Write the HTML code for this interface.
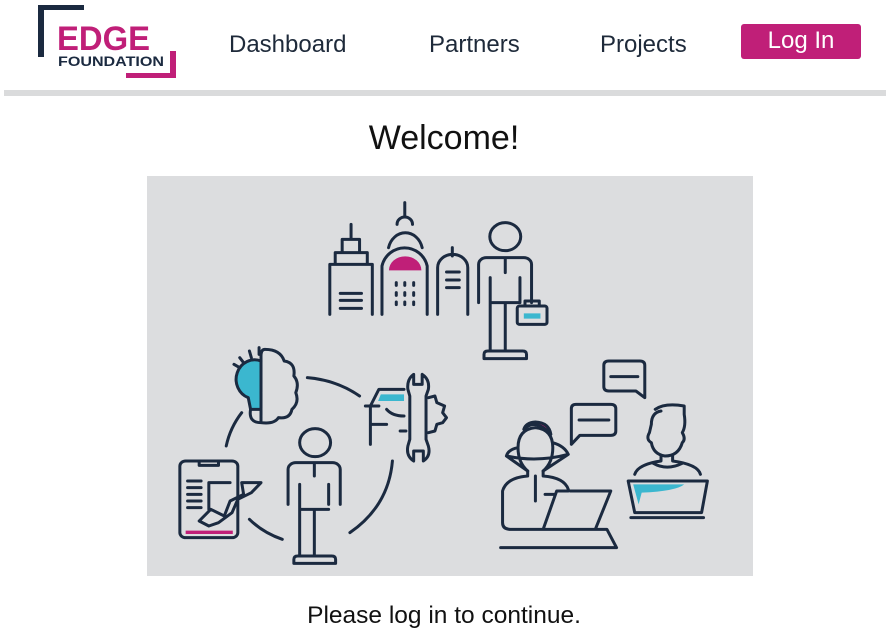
<!DOCTYPE html>
<html><head><meta charset="utf-8"><style>
*{margin:0;padding:0;box-sizing:border-box}
body{width:888px;height:639px;background:#fff;font-family:"Liberation Sans",sans-serif;position:relative;overflow:hidden;color:#1e2a3a}
.nav{position:absolute;top:31px;font-size:24px;color:#1e2a3a}
.btn{position:absolute;left:741px;top:24px;width:120px;height:35px;background:#c01f78;border-radius:3px;color:#fff;font-size:24px;text-align:center;line-height:33px}
.bar{position:absolute;left:4px;top:90px;width:882px;height:6px;background:#dadbdc}
.welcome{position:absolute;top:119px;left:0;width:888px;text-align:center;font-size:34px;color:#111}
.img{position:absolute;left:147px;top:176px;width:606px;height:400px;background:#dcdddf}
.foot{position:absolute;top:602px;left:0;width:888px;text-align:center;font-size:24.5px;color:#111}
</style></head><body>
<svg style="position:absolute;left:38px;top:5px" width="142" height="75" viewBox="0 0 142 75">
<path d="M0 0H46V5H6V52H0Z" fill="#1b2a40"/>
<path d="M132 46H138V73H88V68H132Z" fill="#c01f78"/>
<text x="19" y="45" font-family="Liberation Sans" font-weight="bold" font-size="34" fill="#c01f78" textLength="93" lengthAdjust="spacingAndGlyphs">EDGE</text>
<text x="20" y="61" font-family="Liberation Sans" font-weight="bold" font-size="14" fill="#1b2a40" textLength="106" lengthAdjust="spacingAndGlyphs">FOUNDATION</text>
</svg>
<div class="nav" style="left:229px">Dashboard</div>
<div class="nav" style="left:429px">Partners</div>
<div class="nav" style="left:600px">Projects</div>
<div class="btn">Log In</div>
<div class="bar"></div>
<div class="welcome">Welcome!</div>
<div class="img">
<svg width="606" height="400" viewBox="0 0 1568 1200" preserveAspectRatio="none" fill="none" stroke="#1b2a40" stroke-width="3" stroke-linecap="round" stroke-linejoin="round">
<path vector-effect="non-scaling-stroke" d="M528 145V190M505 230V190H550V230M487 265V230H570V265M473 415V265H583V415M500 352H555M500 373H555M500 397H555"/>
<path vector-effect="non-scaling-stroke" d="M667 80V118M647 145A20 22 0 0 1 687 145M625 215A45 60 0 0 1 712 215M608 415V270A60 70 0 0 1 725 270V415"/>
<path d="M626 283A42 42 0 0 1 710 283Z" fill="#c01f78" stroke="none"/>
<path vector-effect="non-scaling-stroke" d="M645 320V328M667 320V328M690 320V328M645 350V358M667 350V358M690 350V358M645 378V386M667 378V386M690 378V386"/>
<path vector-effect="non-scaling-stroke" d="M790 215V240M752 415V275A39 40 0 0 1 830 275V415M775 288H808M775 312H808M775 335H808"/>
<ellipse vector-effect="non-scaling-stroke" cx="927" cy="182" rx="40" ry="42"/>
<path vector-effect="non-scaling-stroke" d="M858 380V265A20 20 0 0 1 878 245H975A20 20 0 0 1 995 265V380M888 305V525M965 305V380M927 245V290M927 380V525M888 380H965M872 548V535Q872 525 882 525H972Q982 525 982 535V548Z"/>
<rect vector-effect="non-scaling-stroke" x="958" y="390" width="77" height="55" rx="6"/><path vector-effect="non-scaling-stroke" d="M978 390V375H1015V390"/>
<path d="M975 412H1018V428H975Z" fill="#3bb7cf" stroke="none"/>
<path vector-effect="non-scaling-stroke" d="M415 605Q490 612 550 660M245 710Q215 755 205 810M265 1030Q300 1070 350 1090M525 1070Q625 990 635 855"/>
<path vector-effect="non-scaling-stroke" d="M295 555A45 55 0 0 0 262 665L268 700H295" fill="#3bb7cf"/>
<path vector-effect="non-scaling-stroke" d="M295 540V740Q330 745 340 725Q370 730 375 700Q395 680 385 650Q395 620 380 600Q385 560 355 555Q345 520 305 520Q295 520 295 540M268 700Q262 740 295 740M225 565L240 575M240 545L250 560M265 525L270 545M290 515V535"/>
<path vector-effect="non-scaling-stroke" d="M578 805V690L600 640H665M565 690H600M580 745H620M655 765H670M620 700Q635 720 665 720"/>
<path d="M605 655H665V675H598Z" fill="#3bb7cf" stroke="none"/>
<path vector-effect="non-scaling-stroke" d="M690 595Q672 610 675 640L680 660V790L675 810Q670 840 690 855V825H715V855Q735 840 728 810L722 790V660L728 640Q732 610 712 595V625H690Z"/>
<path vector-effect="non-scaling-stroke" d="M728 665L745 660L750 680L770 690L765 710L775 725L765 740L750 745L745 765L728 770"/>
<rect vector-effect="non-scaling-stroke" x="85" y="855" width="150" height="230" rx="15"/>
<path vector-effect="non-scaling-stroke" d="M135 855V868H185V855M105 915H140M105 935H140M105 955H140M105 975H140M105 995H140M160 1000V920H215"/>
<path d="M100 1064H222V1074H100Z" fill="#c01f78" stroke="none"/>
<path vector-effect="non-scaling-stroke" d="M135 1035L165 1000L200 1020L215 975L250 955L245 920L295 920L270 950L235 970L220 1010L185 1040L160 1050Z" fill="#dcdddf"/>
<ellipse vector-effect="non-scaling-stroke" cx="435" cy="800" rx="40" ry="42"/>
<path vector-effect="non-scaling-stroke" d="M365 985V880A20 20 0 0 1 385 860H480A20 20 0 0 1 500 880V985M395 925V1140M470 925V985M433 860V900M433 1000V1140M395 1000H470M380 1162V1150Q380 1140 390 1140H478Q488 1140 488 1150V1162Z"/>
<path vector-effect="non-scaling-stroke" d="M1195 555H1275Q1288 555 1288 568V665L1265 645H1195Q1182 645 1182 632V568Q1182 555 1195 555ZM1200 602H1270"/>
<path vector-effect="non-scaling-stroke" d="M1110 685H1200Q1213 685 1213 698V765Q1213 778 1200 778H1120L1098 805V698Q1098 685 1110 685ZM1118 732H1195"/>
<path vector-effect="non-scaling-stroke" d="M985 885Q960 860 960 815Q960 760 1005 755Q1050 760 1050 815Q1050 860 1025 885M960 815Q935 820 930 840Q1010 860 1090 835Q1080 810 1050 800M930 840L985 885M1025 885L1090 835"/>
<path vector-effect="non-scaling-stroke" d="M975 760Q1005 725 1045 775Q1040 740 1005 738Q980 740 975 760Z" fill="#c01f78"/>
<path vector-effect="non-scaling-stroke" d="M985 885V900Q930 905 920 945V1040Q920 1060 940 1060H1025M1025 885V900Q1080 905 1090 940M1005 900V975M1030 955H1055M1095 945H1200L1160 1060H1025L1060 945H1090M1095 1060H1190L1215 1115H915"/>
<path vector-effect="non-scaling-stroke" d="M1315 700Q1340 680 1390 690V715Q1395 750 1385 770Q1395 790 1385 800Q1375 840 1340 840Q1310 835 1305 800Q1290 790 1300 770L1305 745Q1305 710 1330 705"/>
<path vector-effect="non-scaling-stroke" d="M1330 840V855Q1270 865 1262 895M1360 840V855Q1425 865 1432 895M1310 862Q1345 885 1385 862"/>
<path vector-effect="non-scaling-stroke" d="M1245 915H1450L1435 1010H1262Z"/>
<path d="M1258 925H1390Q1370 945 1280 950L1272 985Z" fill="#3bb7cf" stroke="none"/>
<path vector-effect="non-scaling-stroke" d="M1252 1025H1440"/>
</svg>
</div>
<div class="foot">Please log in to continue.</div>
</body></html>
